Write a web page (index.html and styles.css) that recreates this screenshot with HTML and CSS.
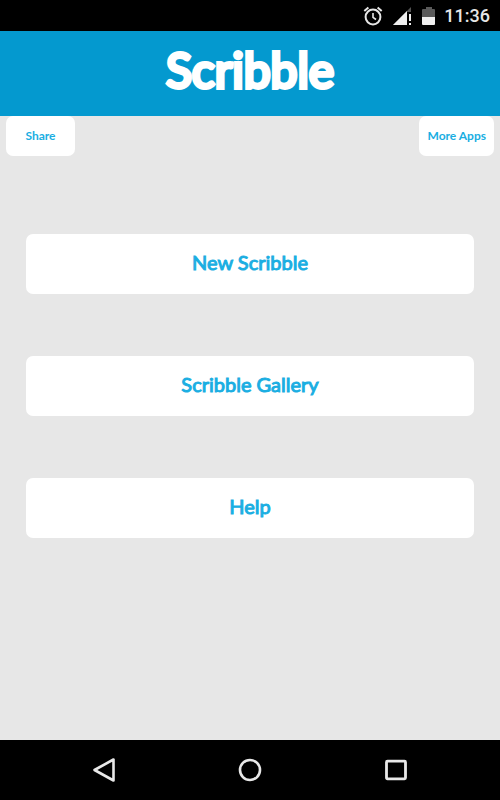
FILE: index.html
```html
<!DOCTYPE html>
<html lang="en">
<head>
<meta charset="utf-8">
<meta name="viewport" content="width=device-width, initial-scale=1">
<title>Scribble</title>
<link rel="stylesheet" href="styles.css">
</head>
<body>
<div class="status">
  <svg class="alarm" width="20" height="20" viewBox="0 0 20 20" aria-hidden="true">
    <circle cx="10" cy="11" r="7.4" fill="none" stroke="#e6e6e6" stroke-width="2"/>
    <path d="M1.3 5 5.4 1.5M18.7 5 14.6 1.5" stroke="#e6e6e6" stroke-width="2" fill="none"/>
    <path d="M10 7v4.3l3 2.2" stroke="#e6e6e6" stroke-width="1.6" fill="none"/>
  </svg>
  <svg class="signal" width="20" height="18" viewBox="0 0 20 18" aria-hidden="true">
    <path d="M0 18 18 0v5h-4v13z" fill="#545454"/>
    <path d="M0 18 14 4v14z" fill="#efefef"/>
    <path d="M16 7h2v7h-2zM16 16h2v2h-2z" fill="#efefef"/>
  </svg>
  <svg class="battery" width="14" height="18" viewBox="0 0 14 18" aria-hidden="true">
    <path d="M4 0h6v2h2q1 0 1 1v8H0V3q0-1 1-1h3z" fill="#5a5a5a"/>
    <path d="M0 10h13v7q0 1-1 1H1q-1 0-1-1z" fill="#f0f0f0"/>
  </svg>
  <time class="clock">11:36</time>
</div>
<header class="header"><h1 class="title">Scribble</h1></header>
<main class="main">
  <div class="tools">
    <button class="small" type="button">Share</button>
    <button class="small" type="button">More Apps</button>
  </div>
  <div class="menu">
    <button class="item" type="button">New Scribble</button>
    <button class="item" type="button">Scribble Gallery</button>
    <button class="item" type="button">Help</button>
  </div>
</main>
<nav class="nav">
  <button class="key" type="button" aria-label="Back">
    <svg width="24" height="26" viewBox="0 0 24 26" aria-hidden="true"><path d="M21.5 2.5v21L2.5 13z" fill="none" stroke="#e8e8e8" stroke-width="2.6" stroke-linejoin="round"/></svg>
  </button>
  <button class="key" type="button" aria-label="Home">
    <svg width="24" height="24" viewBox="0 0 24 24" aria-hidden="true"><circle cx="12" cy="12" r="10" fill="none" stroke="#e8e8e8" stroke-width="2.6"/></svg>
  </button>
  <button class="key" type="button" aria-label="Recent apps">
    <svg width="24" height="24" viewBox="0 0 24 24" aria-hidden="true"><rect x="2.5" y="3.2" width="19" height="17.6" rx="1" fill="none" stroke="#e8e8e8" stroke-width="2.8"/></svg>
  </button>
</nav>
</body>
</html>
```
FILE: styles.css
```css
* {
  box-sizing: border-box;
}

body {
  margin: 0;
  min-height: 100vh;
  display: flex;
  flex-direction: column;
  background: #e7e7e7;
  font-family: Lato, "Open Sans", sans-serif;
}

button {
  border: 0;
  margin: 0;
  font-family: inherit;
  cursor: pointer;
}

.status {
  height: 31px;
  display: flex;
  align-items: center;
  justify-content: flex-end;
  padding: 0 10px;
  background: #000;
  color: #e6e6e6;
}

.signal {
  margin-left: 10px;
}

.battery {
  margin-left: 9px;
}

.clock {
  margin-left: 8px;
  font: 500 18px/32px Roboto, sans-serif;
}

.header {
  height: 85px;
  display: flex;
  justify-content: center;
  background: #0499cf;
}

.title {
  margin: 0;
  color: #fff;
  font-size: 48px;
  font-weight: 400;
  line-height: 78px;
  -webkit-text-stroke: 4px #fff;
}

.main {
  flex: 1;
}

.tools {
  display: flex;
  justify-content: space-between;
  padding: 0 6px;
}

.small {
  min-width: 69px;
  height: 40px;
  padding: 0 8px 2px;
  border-radius: 7px;
  background: #fff;
  color: #1aaee2;
  font-size: 12px;
  font-weight: 700;
}

.menu {
  display: flex;
  flex-direction: column;
  gap: 62px;
  padding: 78px 26px 0;
}

.item {
  height: 60px;
  padding: 0 12px 4px;
  border-radius: 7px;
  background: #fff;
  color: #1aaee2;
  font-size: 20px;
  font-weight: 400;
  -webkit-text-stroke: 1px #1aaee2;
}

.nav {
  height: 60px;
  display: flex;
  align-items: center;
  justify-content: center;
  background: #000;
}

.key {
  width: 146px;
  height: 60px;
  display: flex;
  align-items: center;
  justify-content: center;
  padding: 0;
  background: none;
}
```
